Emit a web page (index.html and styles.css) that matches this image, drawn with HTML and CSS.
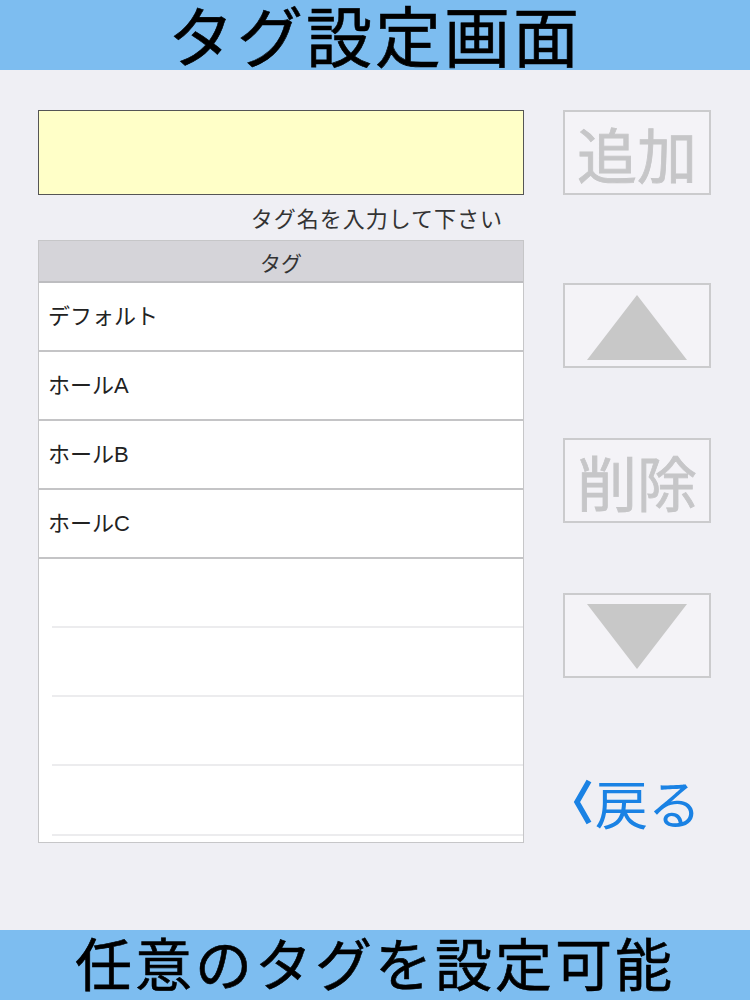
FILE: index.html
```html
<!DOCTYPE html>
<html lang="ja">

<head>
    <meta charset="UTF-8">
    <meta name="viewport" content="width=device-width, initial-scale=1.0">
    <title>タグ設定画面</title>
    <link rel="stylesheet" href="styles.css">
</head>

<body>
    <header class="banner top">タグ設定画面</header>

    <main class="content">
        <section class="left-col">
            <input type="text" class="tag-input" id="tagName">
            <p class="hint">タグ名を入力して下さい</p>

            <div class="tag-table">
                <div class="table-head">タグ</div>
                <div class="row">デフォルト</div>
                <div class="row">ホールA</div>
                <div class="row">ホールB</div>
                <div class="row">ホールC</div>
                <div class="row empty"></div>
                <div class="row empty"></div>
                <div class="row empty"></div>
                <div class="row empty last"></div>
            </div>
        </section>

        <aside class="right-col">
            <button class="side-btn btn-add">追加</button>
            <button class="side-btn btn-up">
                <svg width="100" height="66" viewBox="0 0 100 66"><polygon points="50,0 100,65 0,65" fill="#c8c8c8"/></svg>
            </button>
            <button class="side-btn btn-del">削除</button>
            <button class="side-btn btn-down">
                <svg width="100" height="66" viewBox="0 0 100 66"><polygon points="0,0 100,0 50,65" fill="#c8c8c8"/></svg>
            </button>
            <a class="back-link" href="#">
                <svg width="20" height="48" viewBox="0 0 20 48"><polyline points="16,3 4,24 16,45" fill="none" stroke="#1a82e4" stroke-width="5.5" stroke-linejoin="miter"/></svg>
                <span>戻る</span>
            </a>
        </aside>
    </main>

    <footer class="banner bottom">任意のタグを設定可能</footer>
</body>

</html>
```

FILE: styles.css
```css
* {
    box-sizing: border-box;
}

body {
    margin: 0;
    min-height: 100vh;
    display: flex;
    flex-direction: column;
    background-color: #efeff4;
    font-family: "Liberation Sans", "Noto Sans CJK JP", sans-serif;
    color: #222;
}

.banner {
    background-color: #7dbdf0;
    color: #000;
    text-align: center;
    font-family: "Noto Sans CJK JP", sans-serif;
    font-weight: 400;
    -webkit-text-stroke: 0.6px #000;
    height: 70px;
    overflow: hidden;
}

.top {
    font-size: 66px;
    line-height: 66px;
    letter-spacing: 3px;
}

.bottom {
    margin-top: auto;
    font-size: 57px;
    line-height: 62px;
    letter-spacing: 3px;
}

.content {
    display: flex;
    padding: 40px 0 0 38px;
}

.left-col {
    width: 486px;
}

.tag-input {
    display: block;
    width: 100%;
    height: 85px;
    background-color: #ffffc8;
    border: 1px solid #555;
    margin: 0;
}

.hint {
    margin: 9px 21px 0 0;
    text-align: right;
    font-size: 22px;
    letter-spacing: 1px;
    line-height: 26px;
    color: #333;
    font-family: "Noto Sans CJK JP", sans-serif;
}

.tag-table {
    margin-top: 10px;
    background-color: #fff;
    border: 1px solid #c6c6c8;
    height: 603px;
}

.table-head {
    height: 42px;
    background-color: #d5d4d9;
    border-bottom: 2px solid #bdbdc0;
    text-align: center;
    font-size: 21px;
    line-height: 42px;
    color: #333;
    font-family: "Noto Sans CJK JP", sans-serif;
}

.row {
    height: 69px;
    border-bottom: 2px solid #c4c4c6;
    padding-left: 9px;
    font-size: 22px;
    line-height: 67px;
}

.row.empty {
    border-bottom: 2px solid #ececee;
    margin-left: 13px;
}

.row.last {
    height: 70px;
}

.right-col {
    display: flex;
    flex-direction: column;
    margin-left: 39px;
    width: 148px;
}

.side-btn {
    width: 148px;
    height: 85px;
    border: 2px solid #cbcbcd;
    background-color: #f4f3f7;
    color: #c6c6c8;
    font-family: "Noto Sans CJK JP", sans-serif;
    font-size: 60px;
    -webkit-text-stroke: 0.8px #c6c6c8;
    line-height: 1;
    padding: 0;
    display: flex;
    align-items: center;
    justify-content: center;
    cursor: pointer;
}

.btn-up {
    margin-top: 88px;
}

.btn-del,
.btn-down {
    margin-top: 70px;
}

.btn-up svg {
    margin-top: 4px;
}

.btn-down svg {
    margin-top: 2px;
}

.back-link {
    margin-top: 96px;
    margin-left: 10px;
    display: flex;
    align-items: center;
    gap: 2px;
    color: #1a82e4;
    text-decoration: none;
    font-family: "Noto Sans CJK JP", sans-serif;
    font-size: 53px;
    line-height: 56px;
}
```
